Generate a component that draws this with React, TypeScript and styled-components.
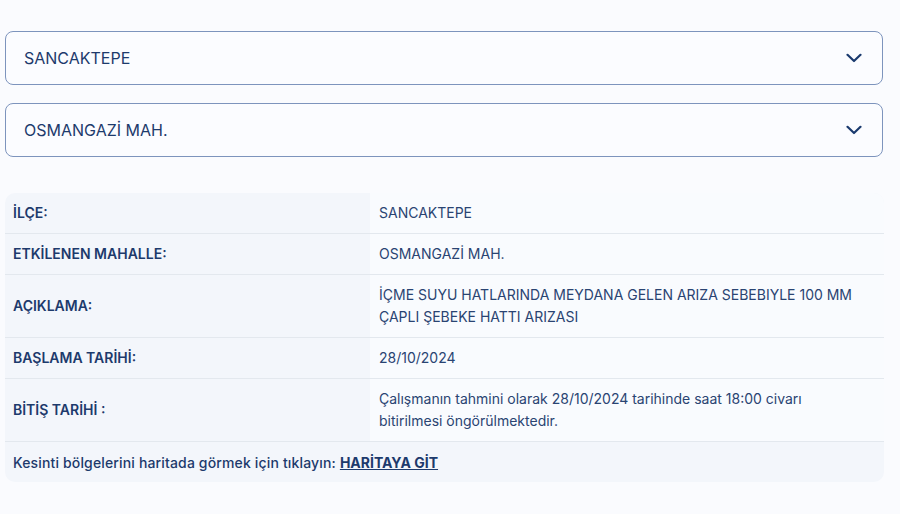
import React from "react";
import styled, { createGlobalStyle } from "styled-components";

const ROWS: { label: string; value: string }[] = [
	{ label: "İLÇE:", value: "SANCAKTEPE" },
	{ label: "ETKİLENEN MAHALLE:", value: "OSMANGAZİ MAH." },
	{
		label: "AÇIKLAMA:",
		value: "İÇME SUYU HATLARINDA MEYDANA GELEN ARIZA SEBEBIYLE 100 MM ÇAPLI ŞEBEKE HATTI ARIZASI",
	},
	{ label: "BAŞLAMA TARİHİ:", value: "28/10/2024" },
	{
		label: "BİTİŞ TARİHİ :",
		value: "Çalışmanın tahmini olarak 28/10/2024 tarihinde saat 18:00 civarı bitirilmesi öngörülmektedir.",
	},
];

const Chevron: React.FC = () => (
	<svg width="16" height="10" viewBox="0 0 16 10" fill="none">
		<path d="M1.5 1.8 L8 8 L14.5 1.8" stroke="#1a3a6e" strokeWidth="2.2" strokeLinecap="round" strokeLinejoin="round" />
	</svg>
);

const App: React.FC = () => {
	return (
		<>
			<GlobalStyle />
			<Page>
				<Select>
					<span>SANCAKTEPE</span>
					<Chevron />
				</Select>
				<Select>
					<span>OSMANGAZİ MAH.</span>
					<Chevron />
				</Select>
				<Card>
					{ROWS.map((row) => (
						<Row key={row.label}>
							<Label>{row.label}</Label>
							<Value>{row.value}</Value>
						</Row>
					))}
					<Footer>
						Kesinti bölgelerini haritada görmek için tıklayın: <MapLink href="#">HARİTAYA GİT</MapLink>
					</Footer>
				</Card>
			</Page>
		</>
	);
};
export default App;

const GlobalStyle = createGlobalStyle`
	* {
		box-sizing: border-box;
	}
	body {
		margin: 0;
		background: #fafbfe;
		font-family: Inter, "Liberation Sans", sans-serif;
		color: #1d3a6c;
	}
`;

const Page = styled.div`
	display: flex;
	flex-direction: column;
	padding: 31px 17px 0 5px;
`;

const Select = styled.div`
	display: flex;
	align-items: center;
	justify-content: space-between;
	height: 54px;
	padding: 0 20px 0 18px;
	border: 1.5px solid #7d94bd;
	border-radius: 8px;
	background: #fbfcff;
	font-size: 16px;
	color: #1d3a6c;

	& + & {
		margin-top: 18px;
	}
`;

const Card = styled.div`
	margin-top: 36px;
	margin-right: -1px;
	background: #f3f6fb;
	border-radius: 10px;
	overflow: hidden;
`;

const Row = styled.div`
	display: grid;
	grid-template-columns: 365px 1fr;
	border-bottom: 1px solid #e3e8ee;
	font-size: 14px;
	line-height: 22px;
`;

const Label = styled.div`
	display: flex;
	align-items: center;
	padding: 9px 8px;
	font-weight: 600;
	color: #1d3a6c;
`;

const Value = styled.div`
	padding: 9px 20px 9px 9px;
	background: #f9fbfe;
	color: #2a4472;
`;

const Footer = styled.div`
	display: flex;
	align-items: center;
	gap: 4px;
	height: 40px;
	padding: 0 8px;
	font-size: 14px;
	font-weight: 500;
	letter-spacing: 0.15px;
	color: #1d3a6c;
`;

const MapLink = styled.a`
	font-weight: 700;
	letter-spacing: 0;
	color: #1d3a6c;
	text-decoration: underline;
`;
